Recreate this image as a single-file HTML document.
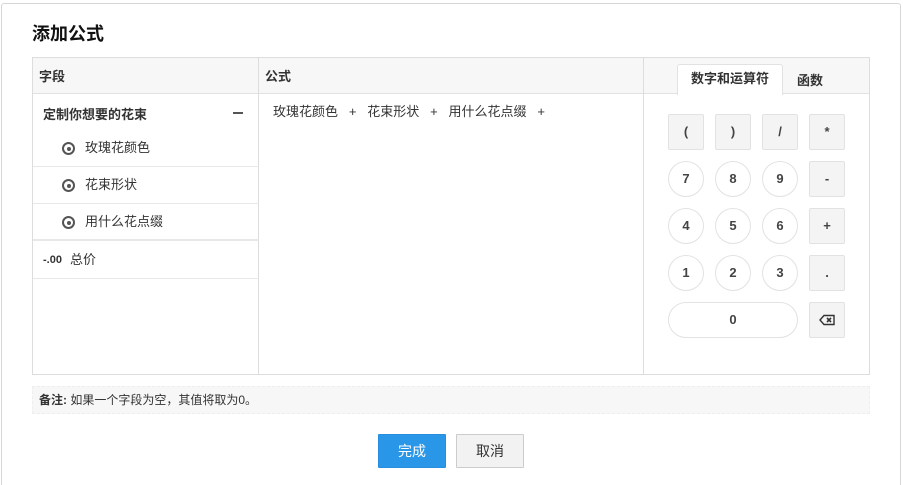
<!DOCTYPE html>
<html style="width:903px;height:485px;overflow:hidden"><head><meta charset="utf-8"><style>
*{box-sizing:border-box;margin:0;padding:0}
body{width:903px;height:485px;background:#fff;font-family:"Liberation Sans","Noto Sans CJK SC",sans-serif;color:#333;position:relative;overflow:hidden;font-size:13px}
.modal{position:absolute;left:1px;top:3px;width:900px;height:490px;border:1px solid #d6d6d6;border-bottom:none;border-radius:3px 3px 0 0;background:#fff}
.a{position:absolute}
h1{position:absolute;left:32px;top:20px;font-size:18px;font-weight:bold;color:#111}
.tbl{left:32px;top:57px;width:838px;height:318px;border:1px solid #ddd}
.hd{background:#f7f7f7;border-bottom:1px solid #e2e2e2;height:36px}
.vl{position:absolute;top:0;bottom:0;width:1px;background:#ddd}
.row{position:absolute;left:0;width:226px;height:37px;border-bottom:1px solid #e8e8e8;line-height:36px}
.radio{position:absolute;left:29px;top:12px;width:13px;height:13px;border:2px solid #555;border-radius:50%}
.radio:after{content:"";position:absolute;left:2.5px;top:2.5px;width:4px;height:4px;background:#555;border-radius:50%}
.k{position:absolute;width:36px;height:36px;border:1px solid #e2e2e2;background:#f4f4f4;border-radius:2px;text-align:center;line-height:34px;font-size:13px;font-weight:bold;color:#444}
.k.c{background:#fff;border-radius:50%}
.btn{position:absolute;top:434px;height:34px;width:68px;text-align:center;line-height:32px;font-size:14px;border-radius:1px}
</style></head><body>
<div class="modal"></div>
<h1>添加公式</h1>
<div class="a tbl">
 <div class="hd"></div>
 <div class="vl" style="left:225px"></div>
 <div class="vl" style="left:610px"></div>
 <div class="a" style="left:6px;top:8px;font-weight:bold;font-size:13px">字段</div>
 <div class="a" style="left:232px;top:8px;font-weight:bold;font-size:13px">公式</div>
 <div class="a" style="left:611px;top:0;width:225px;height:36px;background:#f7f7f7;border-bottom:1px solid #e2e2e2"></div>
 <div class="a" style="left:644px;top:6px;width:106px;height:31px;background:#fff;border:1px solid #e2e2e2;border-bottom:none;border-radius:3px 3px 0 0;text-align:center;line-height:28px;font-weight:bold">数字和运算符</div>
 <div class="a" style="left:764px;top:12px;font-weight:bold">函数</div>
 <div class="a" style="left:10px;top:46px;font-weight:bold;font-size:13px">定制你想要的花束</div>
 <div class="a" style="left:200px;top:54px;width:10px;height:2px;background:#555"></div>
 <div class="row" style="top:72px"><span class="radio"></span><span style="position:absolute;left:52px">玫瑰花颜色</span></div>
 <div class="row" style="top:109px"><span class="radio"></span><span style="position:absolute;left:52px">花束形状</span></div>
 <div class="row" style="top:146px;border-bottom:2px solid #e8e8e8"><span class="radio"></span><span style="position:absolute;left:52px">用什么花点缀</span></div>
 <div class="row" style="top:184px"><span style="position:absolute;left:10px;font-size:11px;font-weight:bold">-.00</span><span style="position:absolute;left:37px">总价</span></div>
 <div class="a" style="left:240px;top:43px">玫瑰花颜色 &nbsp;&nbsp;+&nbsp;&nbsp; 花束形状 &nbsp;&nbsp;+&nbsp;&nbsp; 用什么花点缀 &nbsp;&nbsp;+</div>
</div>
<div class="k" style="left:668px;top:114px">(</div><div class="k" style="left:715px;top:114px">)</div><div class="k" style="left:762px;top:114px">/</div><div class="k" style="left:809px;top:114px">*</div>
<div class="k c" style="left:668px;top:161px">7</div><div class="k c" style="left:715px;top:161px">8</div><div class="k c" style="left:762px;top:161px">9</div><div class="k" style="left:809px;top:161px">-</div>
<div class="k c" style="left:668px;top:208px">4</div><div class="k c" style="left:715px;top:208px">5</div><div class="k c" style="left:762px;top:208px">6</div><div class="k" style="left:809px;top:208px">+</div>
<div class="k c" style="left:668px;top:255px">1</div><div class="k c" style="left:715px;top:255px">2</div><div class="k c" style="left:762px;top:255px">3</div><div class="k" style="left:809px;top:255px">.</div>
<div class="k c" style="left:668px;top:302px;width:130px;border-radius:18px">0</div>
<div class="k" style="left:809px;top:302px"><svg width="16" height="12" viewBox="0 0 16 12" style="margin-top:11px"><path d="M1 6 L5 1.5 H15 V10.5 H5 Z" fill="none" stroke="#333" stroke-width="1.4"/><path d="M8 4 L12 8 M12 4 L8 8" stroke="#333" stroke-width="1.6"/></svg></div>
<div class="a" style="left:32px;top:386px;width:838px;height:28px;background:#f7f7f7;border:1px dashed #eee;line-height:26px;padding-left:6px;font-size:12px"><b>备注:</b> 如果一个字段为空，其值将取为0。</div>
<div class="btn" style="left:378px;background:#2a96e8;color:#fff;border:1px solid #2a8ede">完成</div>
<div class="btn" style="left:456px;background:#f2f2f2;border:1px solid #ccc;color:#333">取消</div>
</body></html>
